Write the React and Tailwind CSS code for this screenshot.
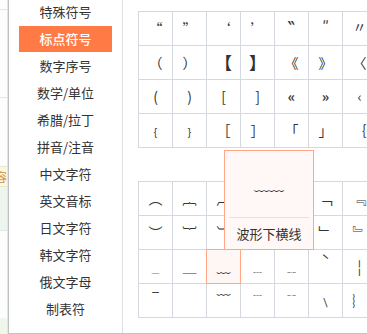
const menu = [
  "特殊符号",
  "标点符号",
  "数字序号",
  "数学/单位",
  "希腊/拉丁",
  "拼音/注音",
  "中文字符",
  "英文音标",
  "日文字符",
  "韩文字符",
  "俄文字母",
  "制表符",
];

const table1 = [
  ["“", "”", "‘", "’", "‶", "″", "〃"],
  ["（", "）", "【", "】", "《", "》", "〈"],
  ["(", ")", "[", "]", "«", "»", "‹"],
  ["﹛", "﹜", "［", "］", "「", "」", "｛"],
];

const table2 = [
  ["︵", "︷", "︹", "︻", "︽", "﹁", "﹃"],
  ["︶", "︸", "︺", "︼", "︾", "﹂", "﹄"],
  ["_", "＿", "﹏", "﹍", "﹎", "ˋ", "¦"],
  ["ˉ", "", "﹋", "﹉", "﹊", "﹨", "︴"],
];

// a few glyphs need their own size or tone to look like the reference
const extra = {
  "【": "text-[17px] font-bold",
  "】": "text-[17px] font-bold",
  "‶": "text-[12px] font-bold pb-[6px]",
  "″": "text-[12px] pb-[6px]",
  "〃": "text-[12px] pb-[4px]",
  "_": "text-[#aaa]",
  "ˋ": "text-[11px] pb-[12px]",
  "ˉ": "text-[18px] pb-[6px]",
  "«": "font-bold",
  "»": "font-bold",
};

function Cell({ ch, active }) {
  return (
    <div
      className={
        "relative w-[34px] h-[34px] shrink-0 border-r border-b border-[#d3d9df] flex items-center justify-center text-[14px] text-[#333] " +
        (extra[ch] || "") +
        (active ? " bg-[#fff7f4]" : "")
      }
    >
      {ch}
      {active && (
        <div className="absolute -inset-px border border-[#ffa788]" />
      )}
    </div>
  );
}

function SymbolTable({ rows, activeCell, className }) {
  return (
    <div className={"w-max border-l border-t border-[#d3d9df] " + (className || "")}>
      {rows.map((row, r) => (
        <div key={r} className="flex">
          {row.map((ch, c) => (
            <Cell
              key={c}
              ch={ch}
              active={activeCell && activeCell[0] === r && activeCell[1] === c}
            />
          ))}
        </div>
      ))}
    </div>
  );
}

export default function App() {
  const active = 1;
  return (
    <div
      className="w-[367px] h-[334px] overflow-hidden flex bg-white"
      style={{ fontFamily: '"Noto Sans CJK SC", "Noto Sans", sans-serif' }}
    >
      {/* page behind the popup */}
      <div className="w-[8px] shrink-0 flex flex-col border-r border-[#e4e4e4] bg-[#fdfdfd]">
        <div className="h-[10px] border-b border-[#e6e6e6]" />
        <div className="h-[88px] border-b border-[#e6e6e6]" />
        <div className="h-[68px]" />
        <div className="h-[21px] bg-[#fbf7e3] border-y border-[#ece6c8] overflow-hidden flex items-center">
          <span className="ml-[-5px] text-[12px] text-[#d5913c] leading-none">容</span>
        </div>
        <div className="h-[44px] bg-[#eef4ee] border-b border-[#e0e6e0]" />
        <div className="flex-1" />
        <div className="h-[16px] bg-[#eff7ea]" />
      </div>

      <div className="flex-1 flex border-l border-b border-[#bfc3c8]">
        {/* category menu */}
        <div className="w-[114px] shrink-0 border-r border-[#dcdfe3] overflow-hidden">
          <ul className="mt-[-2px]">
            {menu.map((item, i) => (
              <li key={item} className="h-[27px] flex items-end">
                <div
                  className={
                    "mx-[10px] w-full h-[26px] flex items-center justify-center text-[13px] " +
                    (i === active
                      ? "bg-[#ff7a45] text-white font-medium"
                      : "text-[#333]")
                  }
                >
                  {item}
                </div>
              </li>
            ))}
          </ul>
        </div>

        {/* symbol panel */}
        <div className="relative flex-1 overflow-hidden pl-[15px] pt-[11px]">
          <SymbolTable rows={table1} />
          <SymbolTable rows={table2} activeCell={[2, 2]} className="mt-[33px]" />

          {/* preview of the hovered symbol */}
          <div className="absolute left-[101px] top-[150px] w-[90px] h-[100px] bg-[#fff8f6] border border-[#ffa788] flex flex-col">
            <div className="h-[66px] flex items-center justify-center text-[15px] text-[#333]">﹏﹏</div>
            <div className="mx-[4px] border-t border-[#fcd9c8]" />
            <div className="flex-1 flex items-center justify-center text-[13px] text-[#333]">
              波形下横线
            </div>
          </div>
        </div>
      </div>
    </div>
  );
}
